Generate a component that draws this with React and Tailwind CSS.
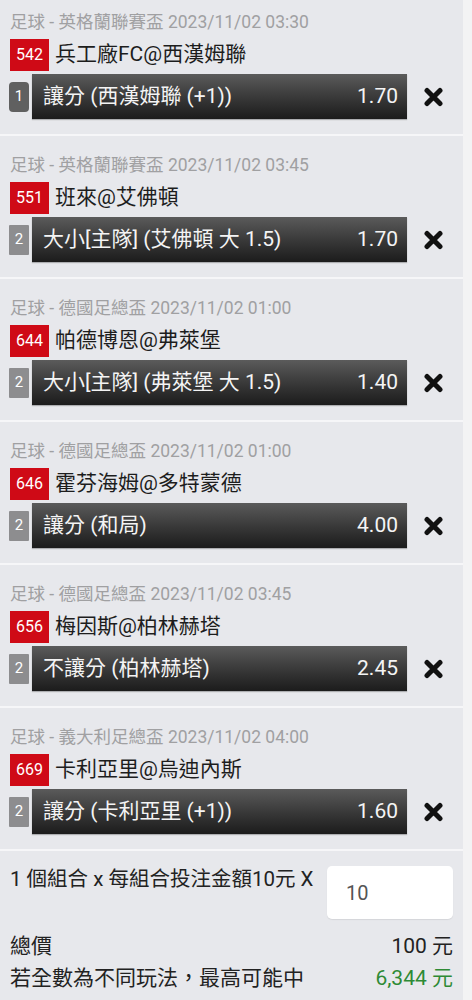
import React from 'react';

const bets = [
  { league: '足球 - 英格蘭聯賽盃', time: '2023/11/02 03:30', code: '542', match: '兵工廠FC@西漢姆聯', n: '1', pick: '讓分 (西漢姆聯 (+1))', odds: '1.70' },
  { league: '足球 - 英格蘭聯賽盃', time: '2023/11/02 03:45', code: '551', match: '班來@艾佛頓', n: '2', pick: '大小[主隊] (艾佛頓 大 1.5)', odds: '1.70' },
  { league: '足球 - 德國足總盃', time: '2023/11/02 01:00', code: '644', match: '帕德博恩@弗萊堡', n: '2', pick: '大小[主隊] (弗萊堡 大 1.5)', odds: '1.40' },
  { league: '足球 - 德國足總盃', time: '2023/11/02 01:00', code: '646', match: '霍芬海姆@多特蒙德', n: '2', pick: '讓分 (和局)', odds: '4.00' },
  { league: '足球 - 德國足總盃', time: '2023/11/02 03:45', code: '656', match: '梅因斯@柏林赫塔', n: '2', pick: '不讓分 (柏林赫塔)', odds: '2.45' },
  { league: '足球 - 義大利足總盃', time: '2023/11/02 04:00', code: '669', match: '卡利亞里@烏迪內斯', n: '2', pick: '讓分 (卡利亞里 (+1))', odds: '1.60' },
];

function RemoveIcon() {
  return (
    <svg width="21" height="20" viewBox="0 0 21 20" fill="none">
      <path d="M4 3.5 L17 16.5 M17 3.5 L4 16.5" stroke="#111" strokeWidth="5" strokeLinecap="round" />
    </svg>
  );
}

function BetItem({ bet, first }) {
  return (
    <div className={first ? 'pt-[12px] pb-[15px]' : 'border-t-2 border-[#f6f6f8] pt-[19px] pb-[15px]'}>
      <div className="h-[20px] pl-[10px] text-[17.5px] leading-[20px] text-[#a0a0a2]">{bet.league} {bet.time}</div>
      <div className="mt-[7px] flex h-[32px] items-center pl-[10px]">
        <span className="flex h-[32px] w-[39px] items-center justify-center bg-[#cf0a16] text-[16px] text-white">{bet.code}</span>
        <span className="ml-[6px] text-[21px] text-[#1d1d1d]">{bet.match}</span>
      </div>
      <div className="mt-[3px] flex h-[45px] items-center pl-[9px]">
        <span className={`flex h-[30px] w-[20px] items-center justify-center text-[15px] text-white ${first ? 'rounded-[4px] bg-[#606060]' : 'rounded-[1px] bg-[#8d8d8f]'}`}>{bet.n}</span>
        <div className="ml-[3px] flex h-[45px] w-[375px] items-center justify-between bg-linear-to-b from-[#5b5b5b] to-[#1c1c1c] pl-[11px] pr-[9px] text-[21px] text-[#f4f4f4] shadow-[0_1px_1px_rgba(0,0,0,0.25)]">
          <span>{bet.pick}</span>
          <span>{bet.odds}</span>
        </div>
        <div className="flex w-[52px] items-center justify-center"><RemoveIcon /></div>
      </div>
    </div>
  );
}

export default function App() {
  return (
    <div className="min-h-screen bg-[#f3f3f4]" style={{ fontFamily: 'Roboto, "Noto Sans CJK TC", sans-serif' }}>
      <div className="w-[463px] overflow-hidden bg-[#e7e8ec]" style={{ height: 1000 }}>
        {bets.map((b, i) => <BetItem key={b.code} bet={b} first={i === 0} />)}
        <div className="border-t-2 border-[#f6f6f8] px-[10px] pt-[15px]">
          <div className="flex items-start justify-between">
            <span className="mt-[1px] text-[20.5px] leading-[24px] text-[#222]">1 個組合 x 每組合投注金額10元 X</span>
            <div className="flex h-[53px] w-[126px] shrink-0 items-center rounded-[5px] bg-white pl-[19px] text-[20px] text-[#555] shadow-[0_1px_1px_rgba(0,0,0,0.08)]">10</div>
          </div>
          <div className="mt-[14px] flex h-[28px] items-center justify-between text-[21px] text-[#222]">
            <span>總價</span>
            <span>100 元</span>
          </div>
          <div className="mt-[4px] flex h-[28px] items-center justify-between text-[21px] text-[#222]">
            <span>若全數為不同玩法，最高可能中</span>
            <span className="text-[#2e8a35]">6,344 元</span>
          </div>
        </div>
      </div>
    </div>
  );
}
